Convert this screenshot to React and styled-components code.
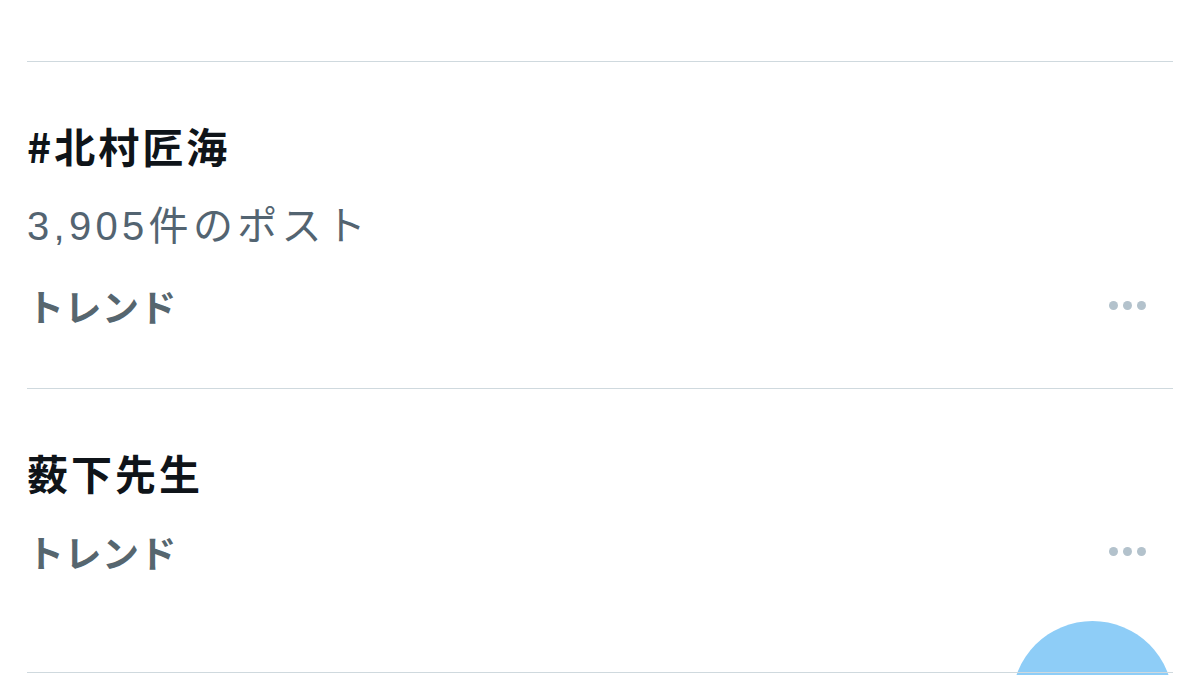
import React from "react";
import styled, { createGlobalStyle } from "styled-components";

const Global = createGlobalStyle`
  html, body { margin: 0; padding: 0; background: #ffffff; }
  body { font-family: "Noto Sans CJK JP", "Noto Sans", sans-serif; overflow: hidden; }
`;

const Page = styled.div`
  position: relative;
  width: 1200px;
  height: 675px;
  overflow: hidden;
  padding-top: 61px;
  box-sizing: border-box;
`;

const List = styled.div`
  margin: 0 27px;
  display: flex;
  flex-direction: column;
`;

const Item = styled.div`
  border-top: 1px solid #cfd9de;
  padding: 49px 0 ${(p) => p.$bottom}px;
  display: flex;
  flex-direction: column;
`;

const Title = styled.div`
  font-size: 41px;
  font-weight: 700;
  color: #0f1419;
  line-height: 68px;
  margin-bottom: 7px;
  letter-spacing: 3px;
`;

const Count = styled.div`
  font-family: "Liberation Sans", "Noto Sans CJK JP", sans-serif;
  font-size: 40px;
  font-weight: 400;
  color: #536471;
  line-height: 77px;
  margin: 2px 0;
  letter-spacing: 4.3px;
`;

const MetaRow = styled.div`
  display: flex;
  align-items: center;
  justify-content: space-between;
  height: 77px;
`;

const Meta = styled.span`
  font-size: 37px;
  font-weight: 700;
  color: #56666f;
  letter-spacing: 0.5px;
`;

const Dots = styled.div`
  display: flex;
  gap: 5px;
  margin-right: 27px;
`;

const Dot = styled.span`
  width: 9px;
  height: 9px;
  border-radius: 50%;
  background: #b3c2cc;
`;

const BottomLine = styled.div`
  position: relative;
  z-index: 2;
  border-top: 1px solid #cfd9de;
`;

const Fab = styled.div`
  position: absolute;
  left: 1012px;
  top: 621px;
  width: 161px;
  height: 161px;
  border-radius: 50%;
  background: #8ecdf7;
  z-index: 1;
`;

const More = () => (
  <Dots>
    <Dot />
    <Dot />
    <Dot />
  </Dots>
);

const trends = [
  { title: "#北村匠海", count: "3,905件のポスト", bottom: 44 },
  { title: "薮下先生", count: null, bottom: 82 },
];

export default function App() {
  return (
    <Page>
      <Global />
      <List>
        {trends.map((t) => (
          <Item key={t.title} $bottom={t.bottom}>
            <Title>{t.title}</Title>
            {t.count && <Count>{t.count}</Count>}
            <MetaRow>
              <Meta>トレンド</Meta>
              <More />
            </MetaRow>
          </Item>
        ))}
        <BottomLine />
      </List>
      <Fab />
    </Page>
  );
}
